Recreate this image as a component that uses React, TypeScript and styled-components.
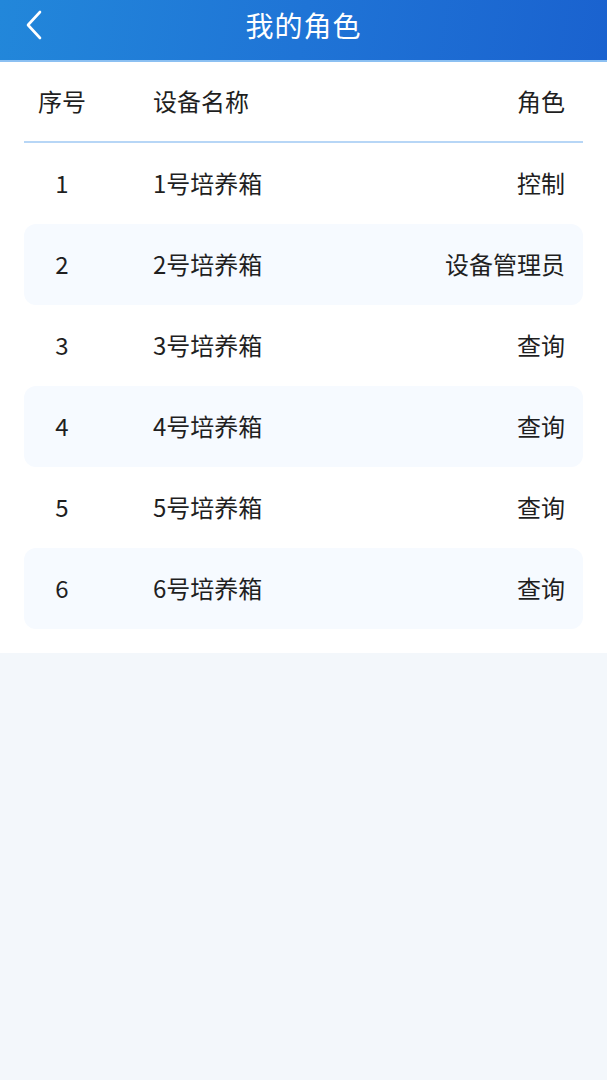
import React from "react";
import styled, { createGlobalStyle } from "styled-components";

const Global = createGlobalStyle`
  html, body { margin: 0; padding: 0; background: #f3f7fb; }
  body { font-family: "Noto Sans CJK SC", "Noto Sans", sans-serif; color: #1f1f1f; }
`;

const Page = styled.div`
  width: 607px;
  min-height: 1080px;
  background: #f3f7fb;
`;

const Header = styled.header`
  position: relative;
  height: 60px;
  display: flex;
  align-items: center;
  justify-content: center;
  background: linear-gradient(100deg, #2287da 0%, #1f74d6 50%, #1a62cf 100%);
  border-bottom: 2px solid #8cc0f2;
`;

const Back = styled.button`
  position: absolute;
  left: 22px;
  top: 8px;
  width: 26px;
  height: 34px;
  padding: 0;
  border: none;
  background: none;
  display: flex;
  align-items: center;
  justify-content: center;
`;

const Title = styled.h1`
  margin: 0;
  margin-top: -11px;
  font-size: 28px;
  font-weight: 400;
  color: #ffffff;
  letter-spacing: 1px;
`;

const Card = styled.section`
  background: #ffffff;
  padding: 0 24px 24px;
`;

const Grid = styled.div`
  display: grid;
  grid-template-columns: 76px 1fr auto;
  align-items: center;
`;

const HeadRow = styled(Grid)`
  height: 79px;
  border-bottom: 2px solid #b7d6f6;
`;

const Row = styled(Grid)<{ $striped: boolean }>`
  height: 81px;
  border-radius: 12px;
  background: ${(p) => (p.$striped ? "#f6faff" : "transparent")};
`;

const Cell = styled.div<{ $align: "center" | "left" | "right" }>`
  font-size: 24px;
  line-height: 1;
  color: #1f1f1f;
  text-align: ${(p) => p.$align};
  padding-right: ${(p) => (p.$align === "right" ? "18px" : "0")};
  padding-left: ${(p) => (p.$align === "left" ? "53px" : "0")};
  margin-top: -2px;
`;

const rows = [
  { id: 1, name: "1号培养箱", role: "控制" },
  { id: 2, name: "2号培养箱", role: "设备管理员" },
  { id: 3, name: "3号培养箱", role: "查询" },
  { id: 4, name: "4号培养箱", role: "查询" },
  { id: 5, name: "5号培养箱", role: "查询" },
  { id: 6, name: "6号培养箱", role: "查询" },
];

export default function App() {
  return (
    <Page>
      <Global />
      <Header>
        <Back aria-label="返回">
          <svg width="22" height="32" viewBox="0 0 22 32" fill="none">
            <path d="M16 3 L4 16 L16 29" stroke="#fff" strokeWidth="2.6" strokeLinecap="round" strokeLinejoin="round" />
          </svg>
        </Back>
        <Title>我的角色</Title>
      </Header>
      <Card>
        <HeadRow>
          <Cell $align="center">序号</Cell>
          <Cell $align="left">设备名称</Cell>
          <Cell $align="right">角色</Cell>
        </HeadRow>
        {rows.map((r, i) => (
          <Row key={r.id} $striped={i % 2 === 1}>
            <Cell $align="center">{r.id}</Cell>
            <Cell $align="left">{r.name}</Cell>
            <Cell $align="right">{r.role}</Cell>
          </Row>
        ))}
      </Card>
    </Page>
  );
}
